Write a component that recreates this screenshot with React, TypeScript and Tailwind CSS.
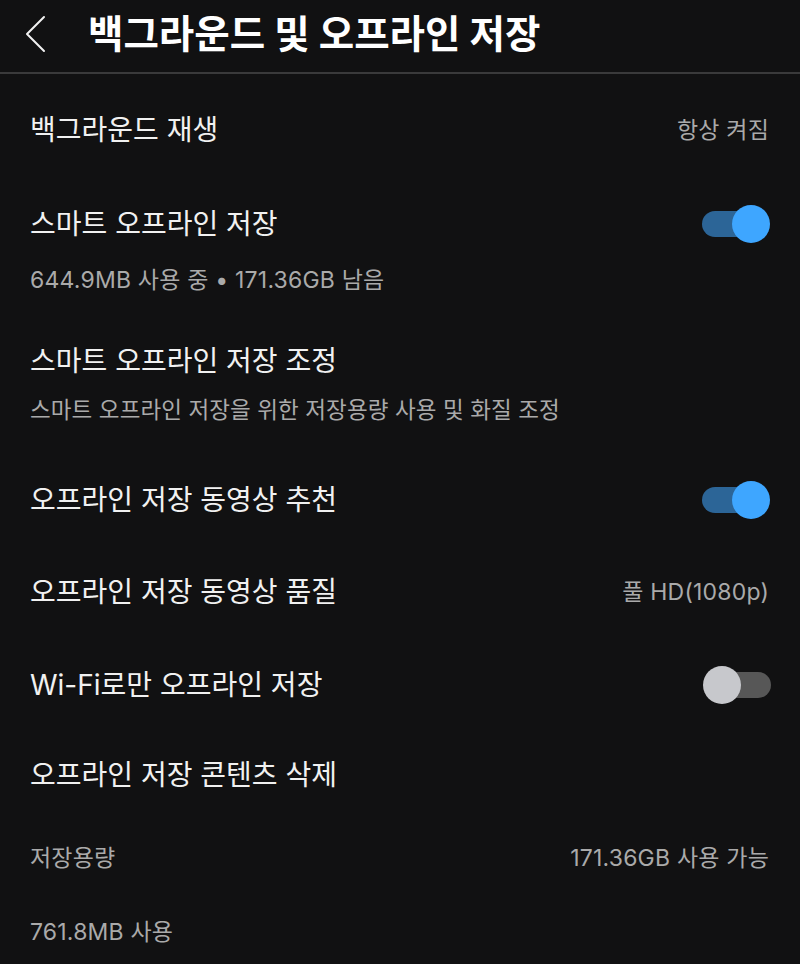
import React from 'react';

const font = { fontFamily: 'Inter, "Noto Sans CJK KR", "Noto Sans", sans-serif' };

const Toggle: React.FC<{ on: boolean }> = ({ on }) => {
  return (
    <div className="relative w-[68px] h-[38px] shrink-0">
      <div
        className={
          on
            ? 'absolute left-0 top-[6px] w-[62px] h-[26px] rounded-full bg-[#2c6597]'
            : 'absolute right-0 top-[6px] w-[62px] h-[26px] rounded-full bg-[#575757]'
        }
      />
      <div
        className={
          on
            ? 'absolute right-0 top-0 w-[38px] h-[38px] rounded-full bg-[#3ea6ff]'
            : 'absolute left-0 top-0 w-[38px] h-[38px] rounded-full bg-[#c7c8cc]'
        }
      />
    </div>
  );
};

const Row: React.FC<{ title: string; right?: React.ReactNode; className?: string }> = ({ title, right, className }) => (
  <div className={`flex items-center justify-between h-[36px] pl-[30px] pr-[31px] ${className ?? ''}`}>
    <span className="text-[28px] leading-[36px] text-[#f1f1f1] whitespace-nowrap">{title}</span>
    {right}
  </div>
);

const Value: React.FC<{ text: string }> = ({ text }) => (
  <span className="text-[23px] leading-[28px] tracking-[0.2px] text-[#aaaaaa] whitespace-nowrap">{text}</span>
);

export default function App() {
  return (
    <div className="w-[800px] h-[964px] overflow-hidden bg-[#111112]" style={font}>
      <header className="h-[74px] flex items-center border-b-2 border-[#3a3a3b] pb-[4px]">
        <div className="w-[88px] flex items-center pl-[24px]">
          <svg width="22" height="40" viewBox="0 0 22 40" fill="none">
            <path d="M20 3 L3 20 L20 37" stroke="#f1f1f1" strokeWidth="2" strokeLinecap="round" strokeLinejoin="round" />
          </svg>
        </div>
        <h1 className="text-[38.5px] leading-[46px] font-bold text-white whitespace-nowrap">백그라운드 및 오프라인 저장</h1>
      </header>

      <Row title="백그라운드 재생" className="mt-[38px]" right={<Value text="항상 켜짐" />} />

      <Row title="스마트 오프라인 저장" className="mt-[58px] !pr-[30px]" right={<Toggle on />} />
      <div className="mt-[24px] pl-[30px] text-[23px] leading-[28px] tracking-[0.2px] text-[#aaaaaa] whitespace-nowrap">
        644.9MB 사용 중 • 171.36GB 남음
      </div>

      <Row title="스마트 오프라인 저장 조정" className="mt-[49px]" />
      <div className="mt-[17px] pl-[30px] text-[22.5px] leading-[28px] tracking-[0.1px] text-[#aaaaaa] whitespace-nowrap">
        스마트 오프라인 저장을 위한 저장용량 사용 및 화질 조정
      </div>

      <Row title="오프라인 저장 동영상 추천" className="mt-[58px] !pr-[30px]" right={<Toggle on />} />

      <Row title="오프라인 저장 동영상 품질" className="mt-[56px]" right={<Value text="풀 HD(1080p)" />} />

      <Row title="Wi-Fi로만 오프라인 저장" className="mt-[57px] !pr-[29px]" right={<Toggle on={false} />} />

      <Row title="오프라인 저장 콘텐츠 삭제" className="mt-[54px]" />

      <div className="mt-[51px] h-[28px] flex items-center justify-between pl-[30px] pr-[31px]">
        <Value text="저장용량" />
        <Value text="171.36GB 사용 가능" />
      </div>

      <div className="mt-[46px] pl-[30px]">
        <Value text="761.8MB 사용" />
      </div>
    </div>
  );
}
